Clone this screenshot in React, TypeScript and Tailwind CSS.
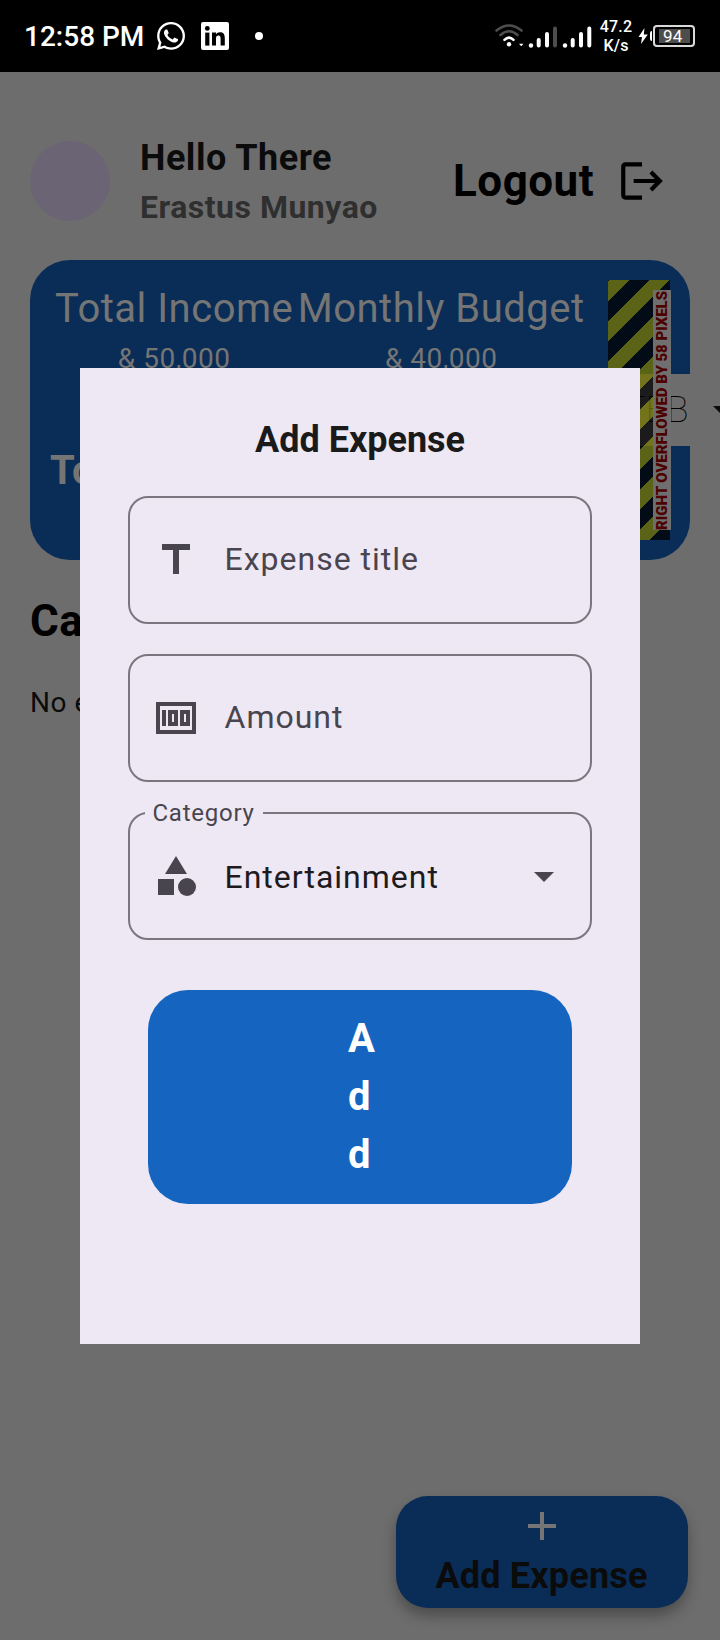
import type { ReactNode } from "react";
import { FaWhatsapp } from "react-icons/fa";

function StatusBar() {
  return (
    <div className="flex h-[72px] items-center bg-black pl-[24px] pr-[25px] text-white">
      <span className="w-[132px] pt-[2px] text-[28px] leading-[34px] font-medium">12:58 PM</span>
      <FaWhatsapp className="-ml-px h-[32px] w-[32px]" />
      <svg className="ml-[14px] h-[28px] w-[28px]" viewBox="0 0 28 28">
        <rect width="28" height="28" rx="2" fill="#fff" />
        <g fill="#000">
          <rect x="4.2" y="10.6" width="4.2" height="13" />
          <circle cx="6.3" cy="6.4" r="2.4" />
          <path d="M11 10.6h4v1.800c.7-1.200 2.100-2.100 4-2.100 4 0 4.800 2.600 4.800 6.100v7.200h-4.200v-6.500c0-1.600-.1-3.500-2.200-3.500s-2.400 1.600-2.400 3.400v6.600h-4z" />
        </g>
      </svg>
      <span className="ml-[26px] h-[8px] w-[8px] rounded-full bg-white" />
      <svg className="ml-auto h-[28px] w-[98px]" viewBox="494 22 98 28" fill="none" strokeLinecap="round">
        <g strokeWidth="2.600">
          <path d="M496.500 30.500Q509 20.500 521.500 30.500" stroke="#4d4d4d" />
          <path d="M500.500 35Q509 27.500 517.500 35" stroke="#4d4d4d" />
          <path d="M504.500 39.800Q509 35.300 513.500 39.800" stroke="#fff" />
        </g>
        <g fill="#fff">
          <circle cx="509" cy="44.300" r="2.200" />
          <path d="M519 43.700h4.500l-2.250 2.600z" />
          <circle cx="531" cy="45.500" r="2.200" />
          <circle cx="565" cy="45.500" r="2.200" />
        </g>
        <g strokeWidth="4" stroke="#fff">
          <path d="M538.700 40v5.500M547 34v11.500M572.700 40v5.500M581 34v11.500M589.300 28.500v17" />
          <path d="M555 28.500v17" stroke="#4d4d4d" />
        </g>
      </svg>
      <div className="ml-[6px] flex w-[36px] flex-col items-center text-[16px] leading-[19px] font-medium tracking-[0.2px]">
        <span>47.2</span>
        <span>K/s</span>
      </div>
      <svg className="ml-[4px] h-[18px] w-[10px]" viewBox="0 0 10 18">
        <path d="M6.500 1L0.500 10H4L3 17L9.800 7.500H5.800Z" fill="#fff" />
      </svg>
      <span className="ml-[2px] h-[10px] w-[2px] rounded-l bg-white" />
      <div className="ml-px flex h-[22px] w-[42px] items-center rounded-[4px] border-2 border-[#d9d9d9] pl-[4px]">
        <span className="flex h-[14px] w-[31px] items-center bg-[#4d4d4d] pl-[4px] text-[17px] leading-[14px] tracking-[0.3px]">94</span>
      </div>
    </div>
  );
}

function Header() {
  return (
    <header className="flex h-[188px] items-center pl-[30px] pr-[53px] pt-[30px] font-bold tracking-[0.5px]">
      <div className="h-[80px] w-[80px] rounded-full bg-[#6b6474]" />
      <div className="ml-[30px] flex flex-col gap-[7px]">
        <span className="text-[36px] leading-[44px] text-[#0b0b0b]">Hello There</span>
        <span className="text-[32px] leading-[40px] text-[#2f2f2f]">Erastus Munyao</span>
      </div>
      <div className="ml-auto flex items-center text-black">
        <span className="w-[164px] text-[44px] leading-[52px]">Logout</span>
        <svg className="h-[50px] w-[50px]" viewBox="0 0 24 24">
          <path d="M17 7l-1.410 1.410L18.170 11H8v2h10.170l-2.580 2.580L17 17l5-5zM4 5h8V3H4c-1.100 0-2 .9-2 2v14c0 1.100.9 2 2 2h8v-2H4V5z" />
        </svg>
      </div>
    </header>
  );
}

function Figure({ label, amount }: { label: string; amount: string }) {
  return (
    <div className="flex flex-col items-center">
      <span className="text-[40px] leading-[48px]">{label}</span>
      <span className="mt-[9px] text-[28px] leading-[34px]">{amount}</span>
    </div>
  );
}

function SummaryCard() {
  return (
    <section className="relative mx-[30px] h-[300px] rounded-[40px] bg-[#0a2d57] pt-[25px] tracking-[0.5px] text-[#757575]">
      <div className="flex gap-[4.5px] pl-[25px]">
        <Figure label="Total Income" amount="& 50,000" />
        <Figure label="Monthly Budget" amount="& 40,000" />
      </div>
      <p className="mt-[71px] pl-[20px] text-[40px] leading-[48px] font-bold">Total</p>
      <div className="absolute right-0 top-[114px] flex h-[72px] w-[100px] items-center justify-end bg-[#6d6d6d] pr-px text-[36px] font-thin text-black">
        TEB
      </div>
      <svg className="absolute left-[683px] top-[146px] h-[10px] w-[20px]" viewBox="0 0 20 10">
        <path d="M0 0h20L10 10z" fill="#0b0b0b" />
      </svg>
      <div className="absolute left-[578px] top-[20px] h-[260px] w-[62px] bg-[repeating-linear-gradient(135deg,rgba(0,0,0,0.75)_0px,rgba(0,0,0,0.75)_0.9px,rgba(117,117,0,0.75)_0.9px,rgba(117,117,0,0.75)_15px,rgba(0,0,0,0.75)_15px,rgba(0,0,0,0.75)_28.284px)]" />
      <div className="absolute left-[623px] top-[30px] flex h-[240px] w-[18px] rotate-180 items-center justify-center bg-[#6f6f6f] text-[15px] leading-[18px] font-black tracking-[-0.05px] whitespace-nowrap text-[#4d0000] [writing-mode:vertical-rl]">
        RIGHT OVERFLOWED BY 58 PIXELS
      </div>
    </section>
  );
}

function Field({ icon, label, children }: { icon: ReactNode; label?: string; children: ReactNode }) {
  return (
    <div className="relative flex h-[128px] items-center rounded-[20px] border-2 border-[#7a757f] pl-[22px] pr-[22px] text-[32px] leading-[40px] tracking-[1px] text-[#49454f]">
      {label && (
        <span className="absolute left-[15px] top-[-15px] w-[118px] bg-[#eee8f4] pl-[7.5px] text-[24px] leading-[28px] tracking-[0.75px]">
          {label}
        </span>
      )}
      <svg className="mr-[24.5px] h-[48px] w-[48px]" viewBox="0 0 24 24" fill="#49454f">
        {icon}
      </svg>
      {children}
    </div>
  );
}

function AddExpenseDialog() {
  return (
    <div className="absolute left-[80px] top-[368px] flex h-[976px] w-[560px] flex-col bg-[#eee8f4] px-[48px] pt-[50px]">
      <h2 className="text-center text-[36px] leading-[44px] font-bold text-[#1a1a1a]">Add Expense</h2>
      <div className="mt-[34px] flex flex-col gap-[30px]">
        <Field icon={<path d="M5 4v3h5.500v12h3V7H19V4z" />}>
          <span className="mb-[2px]">Expense title</span>
        </Field>
        <Field
          icon={
            <path
              fillRule="evenodd"
              d="M2 4h20v16H2zM4 6v12h16V6zM5 8h2v8H5zM8 8h5v8H8zM10 10v4h1v-4zM14 8h5v8h-5zM16 10v4h1v-4z"
            />
          }
        >
          <span className="mb-[2px]">Amount</span>
        </Field>
        <Field
          label="Category"
          icon={
            <>
              <path d="M12 2l-5.500 9h11zM3 13.500h8v8H3z" />
              <circle cx="17.500" cy="17.500" r="4.500" />
            </>
          }
        >
          <span className="mt-[2px] text-[#1d1b20]">Entertainment</span>
          <svg className="ml-auto h-[48px] w-[48px]" viewBox="0 0 24 24" fill="#49454f">
            <path d="M7 10l5 5 5-5z" />
          </svg>
        </Field>
      </div>
      <button className="mx-[20px] mt-[50px] flex h-[214px] flex-col items-start rounded-[40px] bg-[#1565c0] pl-[200px] pt-[20px] text-[40px] leading-[58px] font-bold text-white">
        <span>A</span>
        <span>d</span>
        <span>d</span>
      </button>
    </div>
  );
}

export default function App() {
  return (
    <div className="relative h-[1640px] w-[720px] overflow-hidden bg-[#6d6d6d] font-['Roboto',sans-serif] whitespace-nowrap">
      <StatusBar />
      <Header />
      <SummaryCard />
      <h1 className="mt-[35px] pl-[30px] text-[44px] leading-[52px] font-bold tracking-[0.5px] text-black">Categories</h1>
      <p className="mt-[39px] pl-[30px] text-[28px] leading-[34px] tracking-[0.5px] text-[#0b0b0b]">No expenses</p>
      <button className="absolute left-[395.5px] top-[1496px] flex h-[112px] w-[292px] flex-col items-center rounded-[32px] bg-[#0a2d57] pt-[6px] shadow-[0_8px_14px_rgba(0,0,0,0.3)]">
        <svg className="h-[48px] w-[48px]" viewBox="0 0 24 24" fill="#757575">
          <path d="M19 13h-6v6h-2v-6H5v-2h6V5h2v6h6z" />
        </svg>
        <span className="mt-[4px] text-[36px] leading-[44px] font-bold tracking-[0.2px] text-[#0b0b0b]">Add Expense</span>
      </button>
      <AddExpenseDialog />
    </div>
  );
}
